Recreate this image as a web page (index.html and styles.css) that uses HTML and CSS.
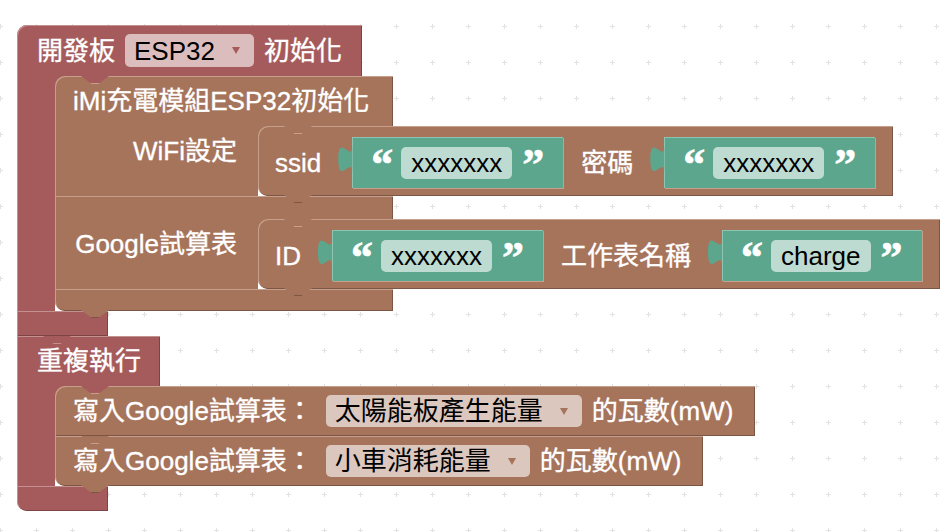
FILE: index.html
```html
<!DOCTYPE html>
<html>
<head>
    <title>Blockly Workspace</title>
    <link rel="stylesheet" href="styles.css">
</head>
<body>
    <div class="workspace">
        <svg class="grid" width="949" height="532">
            <defs>
                <pattern id="cross" x="-18" y="8" width="36" height="36" patternUnits="userSpaceOnUse">
                    <rect x="16" y="18" width="5" height="1" fill="#e2e2e2"/>
                    <rect x="18" y="16" width="1" height="5" fill="#e2e2e2"/>
                </pattern>
            </defs>
            <rect width="949" height="532" fill="url(#cross)"/>
        </svg>

        <div class="stack">
            <!-- board init -->
            <div class="blk red rt">
                <div class="row head board-head">
                    <span>開發板</span>
                    <span class="drop">ESP32<i class="arrow"></i></span>
                    <span>初始化</span>
                </div>
                <div class="stmt">
                    <div class="arm"></div>
                    <div class="inner">
                        <div class="blk brown rt rb prev up-red next">
                            <div class="row head imi-head">iMi充電模組ESP32初始化</div>
                            <div class="stmt">
                                <div class="arm label">WiFi設定</div>
                                <div class="inner">
                                    <div class="blk brown rt rb prev up-brown next">
                                        <div class="row line">
                                            <span>ssid</span>
                                            <span class="val green"><span class="q">“</span><span class="field">xxxxxxx</span><span class="q">”</span></span>
                                            <span class="sep">密碼</span>
                                            <span class="val green"><span class="q">“</span><span class="field">xxxxxxx</span><span class="q">”</span></span>
                                        </div>
                                    </div>
                                </div>
                            </div>
                            <div class="row mid imi-row"></div>
                            <div class="stmt">
                                <div class="arm label">Google試算表</div>
                                <div class="inner">
                                    <div class="blk brown rt rb prev up-brown next">
                                        <div class="row line">
                                            <span>ID</span>
                                            <span class="val green"><span class="q">“</span><span class="field">xxxxxxx</span><span class="q">”</span></span>
                                            <span class="sep">工作表名稱</span>
                                            <span class="val green"><span class="q">“</span><span class="field">charge</span><span class="q">”</span></span>
                                        </div>
                                    </div>
                                </div>
                            </div>
                            <div class="row foot imi-row"></div>
                        </div>
                    </div>
                </div>
                <div class="row foot red-foot"></div>
            </div>

            <!-- loop -->
            <div class="blk red prev up-red">
                <div class="row head loop-head">重複執行</div>
                <div class="stmt">
                    <div class="arm"></div>
                    <div class="inner">
                        <div class="blk brown rt prev up-red">
                            <div class="row line write">
                                <span>寫入Google試算表：</span>
                                <span class="drop">太陽能板產生能量<i class="arrow"></i></span>
                                <span class="tail">的瓦數(mW)</span>
                            </div>
                        </div>
                        <div class="blk brown rb prev up-brown next">
                            <div class="row line write">
                                <span>寫入Google試算表：</span>
                                <span class="drop">小車消耗能量<i class="arrow"></i></span>
                                <span class="tail">的瓦數(mW)</span>
                            </div>
                        </div>
                    </div>
                </div>
                <div class="row foot red-foot last-foot"></div>
            </div>
        </div>
    </div>
</body>
</html>
```

FILE: styles.css
```css
body {
    margin: 0;
    background-color: #ffffff;
    font-family: "Liberation Sans", "Noto Sans CJK TC", sans-serif;
    font-size: 26px;
    overflow: hidden;
}

.workspace {
    position: relative;
    width: 949px;
    height: 532px;
}

.grid {
    position: absolute;
    left: 0;
    top: 0;
}

.stack {
    position: relative;
    display: flex;
    flex-direction: column;
    align-items: flex-start;
    padding: 25px 0 0 17px;
}

/* block colours */
.red { --c: #a55b5b; --hl: #c48f8f; --dk: #7c4444; }
.brown { --c: #a6745b; --hl: #c6a08c; --dk: #7c5644; }
.green { --c: #5ba68d; --hl: #8ec4b2; --dk: #447c6a; }
.up-red { --up: #a55b5b; }
.up-brown { --up: #a6745b; }

.blk {
    display: flex;
    flex-direction: column;
    align-items: flex-start;
}

.row {
    position: relative;
    display: flex;
    align-items: center;
    box-sizing: border-box;
    background-color: var(--c);
    color: #fff;
    line-height: 30px;
    white-space: nowrap;
    -webkit-text-stroke: 0.35px #fff;
}

.head,
.mid {
    box-shadow: inset 1px 1px 0 var(--hl), inset -1px 0 0 var(--dk);
}

.foot,
.line {
    box-shadow: inset 1px 1px 0 var(--hl), inset -1px -1px 0 var(--dk);
}

.rt > .row:first-child {
    border-top-left-radius: 10px;
}

.rb > .row:last-child {
    border-bottom-left-radius: 10px;
}

/* notch cut into the top edge */
.prev > .row:first-child::before {
    content: "";
    position: absolute;
    left: 26px;
    top: 0;
    width: 28px;
    height: 8px;
    background: linear-gradient(var(--up) 7px, var(--hl) 7px);
    clip-path: polygon(0 0, 100% 0, 62% 100%, 38% 100%);
}

/* tab hanging below the bottom edge */
.next > .row:last-child::after {
    content: "";
    position: absolute;
    left: 26px;
    bottom: -7px;
    width: 28px;
    height: 8px;
    background: linear-gradient(var(--c) 7px, var(--dk) 7px);
    clip-path: polygon(0 0, 100% 0, 62% 100%, 38% 100%);
    z-index: 2;
}

.stmt {
    display: flex;
}

.arm {
    width: 38px;
    background-color: var(--c);
    box-shadow: inset 1px 0 0 var(--hl);
}

.arm.label {
    box-sizing: border-box;
    width: 203px;
    padding: 12px 21px 0 0;
    color: #fff;
    line-height: 26px;
    text-align: right;
    white-space: nowrap;
    -webkit-text-stroke: 0.35px #fff;
}

.inner {
    display: flex;
    flex-direction: column;
    align-items: flex-start;
    background: linear-gradient(var(--c), var(--c)) no-repeat 0 0 / 12px 12px;
}

.board-head {
    height: 51px;
    padding: 0 20px;
}

.board-head .drop {
    height: 33px;
    margin: 0 10px;
}

.imi-head {
    width: 338px;
    height: 50px;
    padding-left: 18px;
}

.imi-row.mid {
    width: 338px;
    height: 23px;
}

.imi-row.foot {
    width: 338px;
    height: 22px;
}

.red-foot {
    width: 91px;
    height: 25px;
}

.last-foot {
    border-bottom-left-radius: 10px;
}

.loop-head {
    height: 50px;
    padding: 0 19px 0 20px;
}

.line {
    height: 70px;
    padding: 3px 18px 0 17px;
}

.line.write {
    height: 50px;
    padding: 0 22px 0 18px;
}

.write .drop {
    margin-left: 13px;
}

.tail {
    margin-left: 10px;
}

.sep {
    margin-left: 18px;
}

/* dropdown field */
.drop {
    display: flex;
    align-items: center;
    height: 32px;
    padding: 0 14px 0 9px;
    border-radius: 5px;
    background-color: rgba(255, 255, 255, 0.6);
    color: #000;
    -webkit-text-stroke: 0;
}

.arrow {
    width: 0;
    height: 0;
    margin-left: 17px;
    border-left: 4px solid transparent;
    border-right: 4px solid transparent;
    border-top: 7px solid var(--c);
}

/* text value block */
.val {
    position: relative;
    display: flex;
    align-items: flex-start;
    box-sizing: border-box;
    height: 51px;
    padding: 0 20px 0 19px;
    margin-left: 31px;
    background-color: var(--c);
    box-shadow: inset 1px 1px 0 var(--hl), 1px 1px 0 #c6a08c;
}

.val::before {
    content: "";
    position: absolute;
    left: -14px;
    top: 9px;
    width: 15px;
    height: 27px;
    background-color: var(--c);
    clip-path: path("M14 0 C14 17.7 0 -14.2 0 13.3 C0 40.7 14 8.85 14 26.6 Z");
}

.q {
    width: 21px;
    margin-top: 7px;
    color: #fff;
    font-family: "Liberation Serif", serif;
    font-weight: bold;
    font-size: 44px;
    line-height: 42px;
    text-align: center;
    -webkit-text-stroke: 0.6px #fff;
}

.field {
    align-self: center;
    height: 32px;
    margin: 0 10px 0 9px;
    padding: 0 10px;
    border-radius: 5px;
    background-color: rgba(255, 255, 255, 0.6);
    color: #000;
    line-height: 32px;
    -webkit-text-stroke: 0;
}
```
